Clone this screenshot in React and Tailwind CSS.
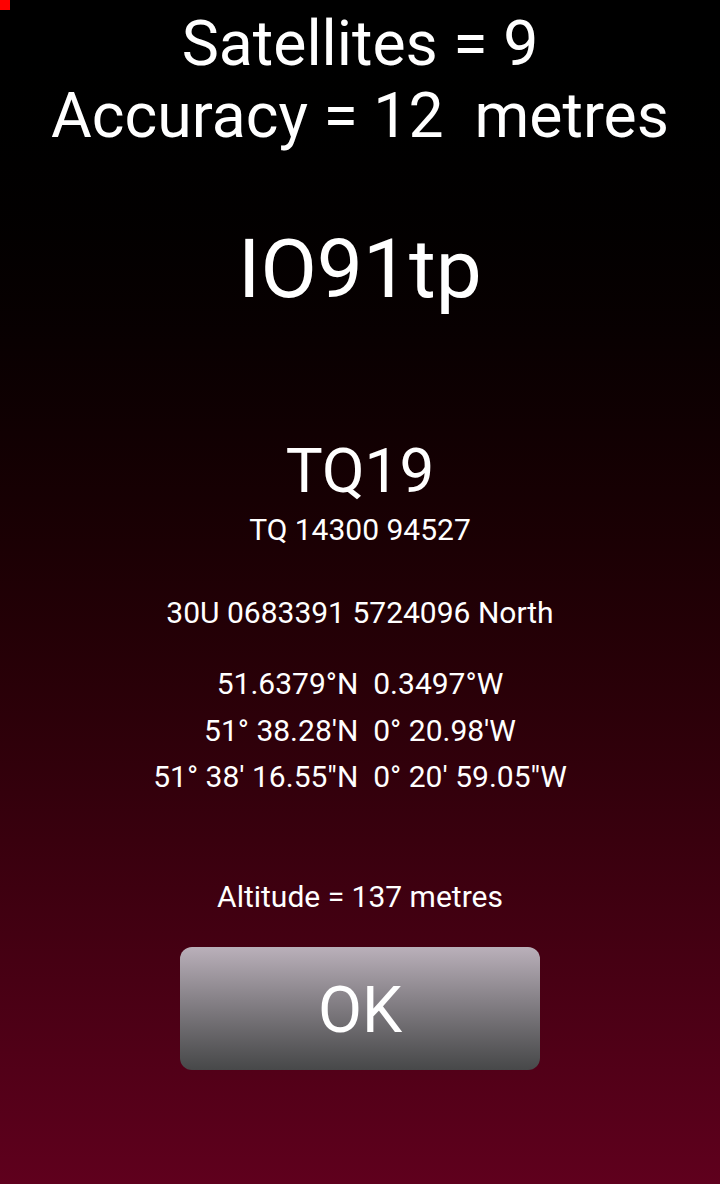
export default function App() {
  const coords = [
    '51.6379°N  0.3497°W',
    "51° 38.28'N  0° 20.98'W",
    `51° 38' 16.55"N  0° 20' 59.05"W`,
  ]

  return (
    <div className="relative w-[720px] h-[1184px] overflow-hidden bg-gradient-to-b from-[#000000] to-[#5f001d] text-white text-center font-['Roboto',sans-serif] whitespace-pre">
      <div className="absolute top-0 left-0 w-[10px] h-[10px] bg-[#ff0000]" />

      <div className="pt-[8px] text-[62.5px] leading-[72px]">
        <p>Satellites = 9</p>
        <p>Accuracy = 12  metres</p>
      </div>

      <p className="mt-[69px] text-[82px] leading-[96px]">IO91tp</p>

      <p className="mt-[117px] text-[62px] leading-[73px]">TQ19</p>
      <p className="mt-[5px] text-[30px] leading-[35px]">TQ 14300 94527</p>

      <p className="mt-[48px] text-[30px] leading-[35px]">30U 0683391 5724096 North</p>

      <div className="mt-[31px] text-[30px] leading-[46.5px]">
        {coords.map(c => <p key={c}>{c}</p>)}
      </div>

      <p className="mt-[78px] text-[30px] leading-[35px]">Altitude = 137 metres</p>

      <div className="flex justify-center mt-[33px]">
        <button className="w-[360px] h-[123px] pt-[5px] rounded-[12px] bg-gradient-to-b from-[#bab0ba] to-[#474849] text-[64px] text-white">
          OK
        </button>
      </div>
    </div>
  )
}
